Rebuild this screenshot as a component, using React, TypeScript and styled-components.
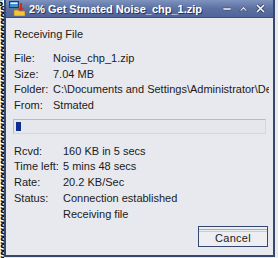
import styled, { createGlobalStyle } from 'styled-components';

const GlobalStyle = createGlobalStyle`
  html, body {
    margin: 0;
    padding: 0;
    background: #e9eaee;
  }
  * {
    box-sizing: border-box;
  }
`;

const Screen = styled.div`
  display: flex;
  width: 278px;
  height: 258px;
  overflow: hidden;
  background: #e9eaee;
`;

const Backdrop = styled.div`
  width: 4px;
  flex: none;
  overflow: hidden;
  background: #ffffff;
  font-family: 'DejaVu Sans', sans-serif;
  font-weight: bold;
  font-size: 9px;
  line-height: 7px;
  color: #111;
  white-space: pre;
  text-indent: -3px;
`;

const Window = styled.div`
  width: 271px;
  height: 257px;
  display: flex;
  flex-direction: column;
  border: 2px solid #34476f;
  border-top: none;
  background: #e8e9ee;
  font-family: 'Liberation Sans', Arial, sans-serif;
  font-size: 11px;
  color: #1a1a1a;
`;

const TitleBar = styled.div`
  height: 18px;
  display: flex;
  align-items: center;
  padding: 0 8px 0 3px;
  background: linear-gradient(#7f93bf, #5c70a2 50%, #50649a);
  border-bottom: 1px solid #3a4d7c;
`;

const TitleText = styled.div`
  flex: 1;
  margin-left: 2px;
  color: #ffffff;
  font-family: 'Liberation Sans', Arial, sans-serif;
  font-weight: bold;
  font-size: 11px;
  text-shadow: 1px 1px 0 #27345a;
  white-space: nowrap;
  overflow: hidden;
`;

const TitleButtons = styled.div`
  display: flex;
  align-items: center;
  gap: 8px;
`;

const Body = styled.div`
  flex: 1;
  display: flex;
  flex-direction: column;
  padding: 8px 4px 8px 8px;
`;

const Heading = styled.div`
  height: 16px;
  line-height: 16px;
  margin-bottom: 9px;
`;

const Row = styled.div<{ $labelWidth: number }>`
  display: grid;
  grid-template-columns: ${({ $labelWidth }) => $labelWidth}px 1fr;
  height: 15.7px;
  line-height: 15.7px;
  white-space: nowrap;
  overflow: hidden;
`;

const Progress = styled.div`
  margin: 5px 3px 10px -1px;
  height: 15px;
  border: 1px solid #b8bac0;
  border-right-color: #d4d6da;
  border-bottom-color: #d4d6da;
  background: #e6e7ec;
  padding: 2px;
`;

const ProgressFill = styled.div`
  height: 100%;
  background: #0d2d8f;
`;

const Footer = styled.div`
  margin-top: auto;
  display: flex;
  justify-content: flex-end;
  padding-right: 1px;
`;

const CancelButton = styled.button`
  width: 70px;
  height: 21px;
  border: 1px solid #34476f;
  background: #eceef2;
  font-family: 'Liberation Sans', Arial, sans-serif;
  font-size: 11px;
  letter-spacing: 0.3px;
  color: #222;
  padding: 2px 0 0;
  box-shadow: inset 0 2px 0 #eceef2, inset 0 3px 0 #a9acb4, inset 0 4px 0 #eceef2, inset 0 5px 0 #c9ccd2;
`;

const TitleIcon = () => (
  <svg width="18" height="15" viewBox="0 0 18 15">
    <rect x="0.5" y="0.5" width="9" height="6" fill="#3d8bd0" stroke="#1d3a6a" />
    <rect x="1.5" y="1.5" width="7" height="1.5" fill="#e8f3ff" />
    <rect x="1.5" y="4" width="7" height="1.2" fill="#4caa4c" />
    <path d="M11 2 L11 7 L9 7 L12 10 L15 7 L13 7 L13 2 Z" fill="#d42a1c" />
    <path d="M5 9 H9 L10 10 H16 V15 H5 Z" fill="#f2c738" stroke="#9a7a18" strokeWidth="0.6" />
  </svg>
);

const MinIcon = () => (
  <svg width="8" height="8" viewBox="0 0 8 8">
    <rect x="0" y="3" width="8" height="2" fill="#ffffff" stroke="#27345a" strokeWidth="0.5" />
  </svg>
);

const UpIcon = () => (
  <svg width="9" height="8" viewBox="0 0 9 8">
    <path d="M0.5 6 L4.5 1.5 L8.5 6 L6.5 6 L4.5 3.8 L2.5 6 Z" fill="#ffffff" stroke="#27345a" strokeWidth="0.6" />
  </svg>
);

const CloseIcon = () => (
  <svg width="9" height="9" viewBox="0 0 9 9">
    <path d="M1 1 L8 8 M8 1 L1 8" stroke="#27345a" strokeWidth="3" />
    <path d="M1 1 L8 8 M8 1 L1 8" stroke="#ffffff" strokeWidth="1.6" />
  </svg>
);

const fileRows = [
  ['File:', 'Noise_chp_1.zip'],
  ['Size:', '7.04 MB'],
  ['Folder:', 'C:\\Documents and Settings\\Administrator\\Desktop'],
  ['From:', 'Stmated'],
];

const statusRows = [
  ['Rcvd:', '160 KB in 5 secs'],
  ['Time left:', '5 mins 48 secs'],
  ['Rate:', '20.2 KB/Sec'],
  ['Status:', 'Connection established'],
  ['', 'Receiving file'],
];

const App = () => {
  const percent = 2;
  return (
    <>
      <GlobalStyle />
      <Screen>
        <Backdrop>{Array(40).fill('S').join('\n')}</Backdrop>
        <Window>
          <TitleBar>
            <TitleIcon />
            <TitleText>{percent}% Get Stmated Noise_chp_1.zip</TitleText>
            <TitleButtons>
              <MinIcon />
              <UpIcon />
              <CloseIcon />
            </TitleButtons>
          </TitleBar>
          <Body>
            <Heading>Receiving File</Heading>
            {fileRows.map(([label, value]) => (
              <Row key={label} $labelWidth={39}>
                <span>{label}</span>
                <span>{value}</span>
              </Row>
            ))}
            <Progress>
              <ProgressFill style={{ width: '5px' }} />
            </Progress>
            {statusRows.map(([label, value], i) => (
              <Row key={i} $labelWidth={49}>
                <span>{label}</span>
                <span>{value}</span>
              </Row>
            ))}
            <Footer>
              <CancelButton>Cancel</CancelButton>
            </Footer>
          </Body>
        </Window>
      </Screen>
    </>
  );
};

export default App;
